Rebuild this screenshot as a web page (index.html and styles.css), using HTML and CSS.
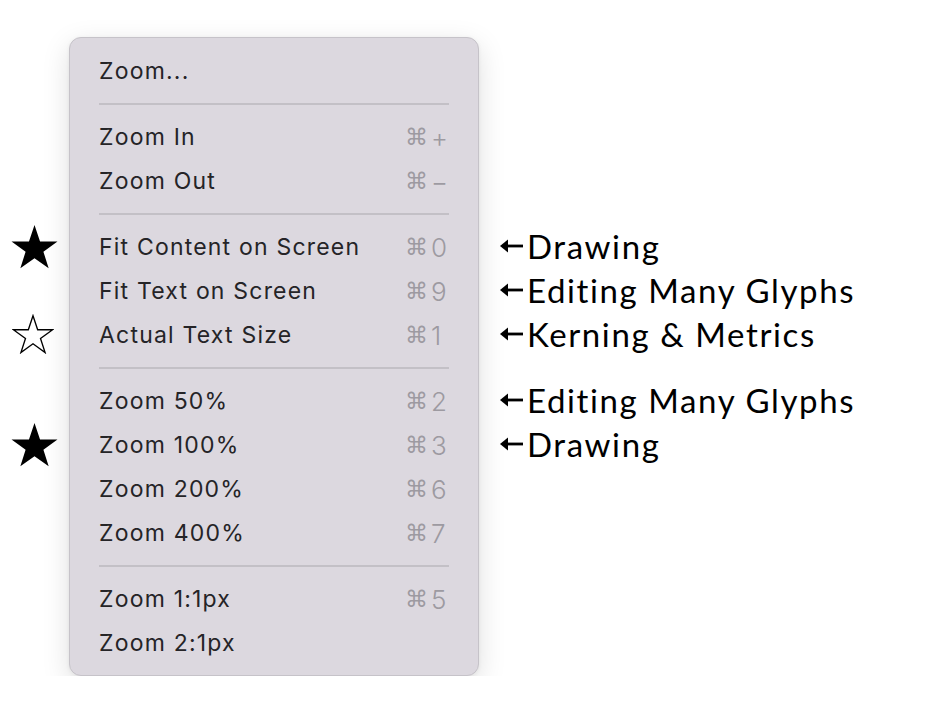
FILE: index.html
```html
<!DOCTYPE html>
<html lang="en">
<head>
    <meta charset="UTF-8">
    <title>View Zoom Menu</title>
    <link rel="stylesheet" href="styles.css">
</head>
<body>
    <div class="page">
        <!-- stars, same rows as the menu -->
        <div class="marks">
            <div class="row"></div>
            <div class="sep"></div>
            <div class="row"></div>
            <div class="row"></div>
            <div class="sep"></div>
            <div class="row"><svg class="star" viewBox="0 0 50 48"><polygon points="25,1 30.9,18.6 49.5,18.6 34.5,29.6 40.1,47.2 25,36.4 9.9,47.2 15.5,29.6 0.5,18.6 19.1,18.6" fill="#000"/></svg></div>
            <div class="row"></div>
            <div class="row"><svg class="star star-open" viewBox="0 0 50 48"><polygon points="25,2 30.6,18.9 48.5,18.9 34,29.4 39.5,46.3 25,35.8 10.5,46.3 16,29.4 1.5,18.9 19.4,18.9" fill="none" stroke="#000" stroke-width="1.6" stroke-linejoin="miter"/></svg></div>
            <div class="sep"></div>
            <div class="row"></div>
            <div class="row"><svg class="star" viewBox="0 0 50 48"><polygon points="25,1 30.9,18.6 49.5,18.6 34.5,29.6 40.1,47.2 25,36.4 9.9,47.2 15.5,29.6 0.5,18.6 19.1,18.6" fill="#000"/></svg></div>
        </div>

        <div class="menu">
            <div class="item"><span>Zoom...</span></div>
            <div class="sep"><hr></div>
            <div class="item"><span>Zoom In</span><span class="key"><i>⌘</i>+</span></div>
            <div class="item"><span>Zoom Out</span><span class="key"><i>⌘</i>−</span></div>
            <div class="sep"><hr></div>
            <div class="item"><span>Fit Content on Screen</span><span class="key"><i>⌘</i>0</span></div>
            <div class="item"><span>Fit Text on Screen</span><span class="key"><i>⌘</i>9</span></div>
            <div class="item"><span>Actual Text Size</span><span class="key"><i>⌘</i>1</span></div>
            <div class="sep"><hr></div>
            <div class="item"><span>Zoom 50%</span><span class="key"><i>⌘</i>2</span></div>
            <div class="item"><span>Zoom 100%</span><span class="key"><i>⌘</i>3</span></div>
            <div class="item"><span>Zoom 200%</span><span class="key"><i>⌘</i>6</span></div>
            <div class="item"><span>Zoom 400%</span><span class="key"><i>⌘</i>7</span></div>
            <div class="sep"><hr></div>
            <div class="item"><span>Zoom 1:1px</span><span class="key"><i>⌘</i>5</span></div>
            <div class="item"><span>Zoom 2:1px</span></div>
        </div>

        <!-- notes on the right -->
        <div class="notes">
            <div class="row"></div>
            <div class="sep"></div>
            <div class="row"></div>
            <div class="row"></div>
            <div class="sep"></div>
            <div class="row note"><svg class="arrow" viewBox="0 0 26 14"><polygon points="0,7 8,0.5 8,13.5" fill="#000"/><rect x="7" y="5.6" width="16" height="2.8" fill="#000"/></svg>Drawing</div>
            <div class="row note"><svg class="arrow" viewBox="0 0 26 14"><polygon points="0,7 8,0.5 8,13.5" fill="#000"/><rect x="7" y="5.6" width="16" height="2.8" fill="#000"/></svg>Editing Many Glyphs</div>
            <div class="row note"><svg class="arrow" viewBox="0 0 26 14"><polygon points="0,7 8,0.5 8,13.5" fill="#000"/><rect x="7" y="5.6" width="16" height="2.8" fill="#000"/></svg>Kerning &amp; Metrics</div>
            <div class="sep"></div>
            <div class="row note"><svg class="arrow" viewBox="0 0 26 14"><polygon points="0,7 8,0.5 8,13.5" fill="#000"/><rect x="7" y="5.6" width="16" height="2.8" fill="#000"/></svg>Editing Many Glyphs</div>
            <div class="row note"><svg class="arrow" viewBox="0 0 26 14"><polygon points="0,7 8,0.5 8,13.5" fill="#000"/><rect x="7" y="5.6" width="16" height="2.8" fill="#000"/></svg>Drawing</div>
        </div>
    </div>
</body>
</html>
```

FILE: styles.css
```css
body {
    margin: 0;
    background: #fff;
    font-family: Inter, "Noto Sans", sans-serif;
}

.page {
    display: flex;
    align-items: flex-start;
    padding-top: 37px;
}

.row, .item {
    height: 44px;
}

.sep {
    height: 22px;
}

/* left column with stars */
.marks {
    width: 69px;
    padding-top: 11px;
}

.marks .row {
    display: flex;
    align-items: center;
}

.star {
    width: 47px;
    height: 45px;
    margin-left: 11px;
}

.star-open {
    width: 42px;
    height: 40px;
    margin-left: 12px;
}

/* the menu */
.menu {
    width: 410px;
    box-sizing: border-box;
    padding: 11px 29px 10px 29px;
    background: #dcd8df;
    border: 1px solid #c6c3c9;
    border-radius: 12px;
    box-shadow: 0 8px 28px rgba(0, 0, 0, 0.13), 0 1px 4px rgba(0, 0, 0, 0.06);
}

.item {
    display: flex;
    align-items: center;
    justify-content: space-between;
    font-size: 23px;
    color: #252427;
    letter-spacing: 1.2px;
}

.key {
    width: 44px;
    color: #9d9aa1;
    display: flex;
    align-items: center;
    font-size: 26px;
    font-weight: 300;
    letter-spacing: 0;
}

.key i {
    font-style: normal;
    font-family: "DejaVu Sans", sans-serif;
    font-size: 23px;
    width: 26px;
}

.menu .sep {
    display: flex;
    align-items: center;
}

.menu hr {
    flex: 1;
    margin: 0;
    border: 0;
    border-top: 2px solid #c3c0c6;
}

/* right column with notes */
.notes {
    padding-top: 11px;
    padding-left: 21px;
}

.note {
    display: flex;
    align-items: center;
    font-family: Lato, sans-serif;
    font-size: 33px;
    letter-spacing: 1.6px;
    color: #000;
    white-space: nowrap;
}

.arrow {
    width: 26px;
    height: 14px;
    margin-right: 1px;
}
```
